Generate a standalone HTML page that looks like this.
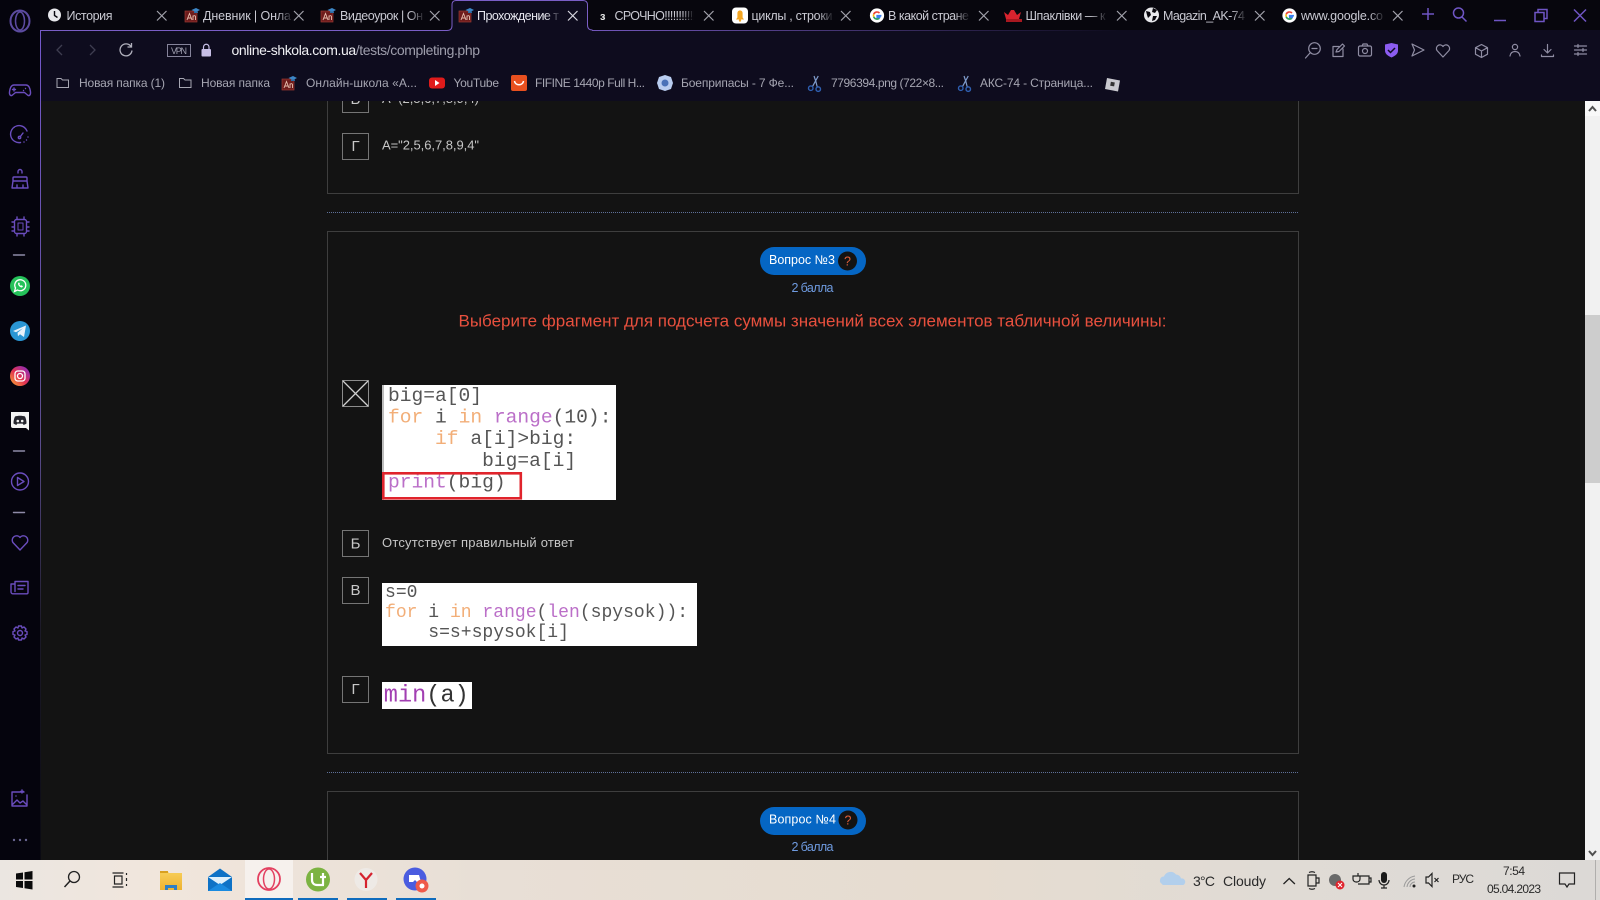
<!DOCTYPE html>
<html lang="ru">
<head>
<meta charset="utf-8">
<title>Прохождение теста</title>
<style>
html,body{margin:0;padding:0;width:1600px;height:900px;overflow:hidden;background:#131313}
svg{display:block;position:absolute;left:0;top:0}
text{font-family:"Liberation Sans","Noto Sans CJK SC",sans-serif}
.tab{font-size:12.5px;fill:#c9c9d2}
.bm{font-size:12px;fill:#a6a6b2}
.pg{font-size:13px;fill:#c6c6c6}
.box{fill:none;stroke:#757575;stroke-width:1}
.ltr{font-size:15px;fill:#c8c8c8;text-anchor:middle}
.mono{font-family:"Liberation Mono",monospace;white-space:pre;fill:#555}
.o{fill:#f2ae78}.p{fill:#bb6fc8}
.x{stroke:#a2a2ac;stroke-width:1.2;fill:none}
.si{fill:none;stroke:#6a4dbd;stroke-width:1.4;stroke-linecap:round;stroke-linejoin:round}
.ti{fill:none;stroke:#8f8da3;stroke-width:1.2;stroke-linecap:round;stroke-linejoin:round}
.wc{fill:none;stroke:#6f55c4;stroke-width:1.5}
.tb{font-size:14px;fill:#2a2a2a}
.tk{fill:none;stroke:#222;stroke-width:1.2}
</style>
</head>
<body>
<svg width="1600" height="900" viewBox="0 0 1600 900" xmlns="http://www.w3.org/2000/svg">
<defs>
<linearGradient id="fd" x1="0" x2="1" y1="0" y2="0"><stop offset="0" stop-color="#07060d" stop-opacity="0"/><stop offset=".55" stop-color="#07060d"/></linearGradient>
<linearGradient id="fa" x1="0" x2="1" y1="0" y2="0"><stop offset="0" stop-color="#0e0c1e" stop-opacity="0"/><stop offset=".55" stop-color="#0e0c1e"/></linearGradient>
<linearGradient id="tline" gradientUnits="userSpaceOnUse" x1="587" x2="1120" y1="0" y2="0"><stop offset="0" stop-color="#7458bd"/><stop offset="1" stop-color="#7458bd" stop-opacity="0"/></linearGradient>
<linearGradient id="sline" x1="0" x2="0" y1="0" y2="1"><stop offset="0" stop-color="#7458cc"/><stop offset=".5" stop-color="#5a4c8c"/><stop offset=".72" stop-color="#1c1a28"/><stop offset="1" stop-color="#0a0a12"/></linearGradient>
<linearGradient id="tbg" x1="0" x2="1" y1="0" y2="0"><stop offset="0" stop-color="#ebe6e1"/><stop offset=".1" stop-color="#f1e6dc"/><stop offset=".3" stop-color="#e8dfd6"/><stop offset=".6" stop-color="#e6dcd0"/><stop offset=".8" stop-color="#e0dbd5"/><stop offset="1" stop-color="#dcd9d6"/></linearGradient>
<linearGradient id="ig" x1="0" x2="1" y1="1" y2="0"><stop offset="0" stop-color="#f9b233"/><stop offset=".45" stop-color="#e4334f"/><stop offset="1" stop-color="#7d2bd0"/></linearGradient>
<linearGradient id="fold" x1="0" x2="0" y1="0" y2="1"><stop offset="0" stop-color="#f8cf5a"/><stop offset="1" stop-color="#eeb230"/></linearGradient>
<symbol id="g" viewBox="0 0 18 18" overflow="visible">
<circle cx="9" cy="9" r="8" fill="#fff"/>
<path d="M14 9.2H9.2V11H12c-.5 1.300-1.600 2-3 2a4 4 0 0 1-3.700-2.600" fill="none" stroke="#3a7ff0" stroke-width="1.800"/>
<path d="M5.300 10.400a4 4 0 0 0 3.700 2.600c1 0 1.800-.3 2.400-.8" fill="none" stroke="#34a853" stroke-width="1.800"/>
<path d="M5.300 7.600a4 4 0 0 0 0 2.800" fill="none" stroke="#fbbc05" stroke-width="1.800"/>
<path d="M5.300 7.600A4 4 0 0 1 11.800 6.200" fill="none" stroke="#ea4335" stroke-width="1.800"/>
</symbol>
<symbol id="an" viewBox="0 0 16 16" overflow="visible">
<rect x="1" y="4" width="12" height="11" fill="#6e1c1c" stroke="#9a3a32" stroke-width=".7"/>
<path d="M3 13 5.500 6.500 8 13M4 11h3M9 13V8.500M9 9.500c1-1.200 2.500-1 2.500.5v3" fill="none" stroke="#e8c0b0" stroke-width=".9"/>
<path d="M7.500 3 12 1l4 2-4 2z" fill="#3d86c6"/><path d="M10 4.500v1.500h4V4.500" fill="#2d6aa0"/>
</symbol>
<symbol id="sc" viewBox="0 0 16 18" overflow="visible">
<path d="M12 1 6 12M7.500 1 9.500 7 11 13" fill="none" stroke="#7f9ccc" stroke-width="1.300"/>
<circle cx="4" cy="14" r="2.400" fill="none" stroke="#2f5fb0" stroke-width="1.500"/>
<circle cx="12" cy="15" r="2.400" fill="none" stroke="#2f5fb0" stroke-width="1.500"/>
</symbol>
</defs>

<!-- page -->
<rect width="1600" height="900" fill="#131313"/>
<rect x="327.500" y="-50" width="971" height="243.500" fill="none" stroke="#3e3e3e"/>
<line x1="327" x2="1299" y1="212.500" y2="212.500" stroke="#5f7199" stroke-dasharray="1 1"/>
<rect x="327.500" y="231.500" width="971" height="522" fill="none" stroke="#3e3e3e"/>
<line x1="327" x2="1299" y1="772.500" y2="772.500" stroke="#5f7199" stroke-dasharray="1 1"/>
<rect x="327.500" y="791.500" width="971" height="150" fill="none" stroke="#3e3e3e"/>

<rect class="box" x="342.500" y="86.500" width="26" height="26"/>
<text class="ltr" x="355.500" y="104">В</text>
<text class="pg" x="382" y="103" textLength="97">A=(2,5,6,7,8,9,4)</text>
<rect class="box" x="342.500" y="133.500" width="26" height="26"/>
<text class="ltr" x="355.500" y="151">Г</text>
<text class="pg" x="382" y="149.500" textLength="97">A="2,5,6,7,8,9,4"</text>

<rect x="760" y="247" width="106" height="28" rx="14" fill="#0566c4"/>
<text x="769" y="264" font-size="12.500" fill="#fff" textLength="66">Вопрос №3</text>
<circle cx="847.500" cy="261" r="9.500" fill="#131313"/>
<text x="847.500" y="265.500" font-size="12.500" fill="#e0603a" text-anchor="middle">?</text>
<text x="791.500" y="292" font-size="12.500" fill="#6f9be0" textLength="42">2 балла</text>
<text x="458.500" y="326.500" font-size="17px" fill="#e8503e" textLength="708">Выберите фрагмент для подсчета суммы значений всех элементов табличной величины:</text>

<rect x="342.500" y="380.500" width="26" height="26" fill="none" stroke="#8c8c8c"/>
<path d="M343 381 368 406M368 381 343 406" stroke="#cfcfcf" stroke-width="1.300"/>

<rect x="382" y="385" width="234" height="115" fill="#fff"/>
<rect x="382" y="385" width="2" height="115" fill="#bdbdbd"/>
<g font-size="19.600px">
<text class="mono" x="388" y="401">big=a[0]</text>
<text class="mono" x="388" y="422.500"><tspan class="o">for</tspan> i <tspan class="o">in</tspan> <tspan class="p">range</tspan>(10):</text>
<text class="mono" x="388" y="444.200">    <tspan class="o">if</tspan> a[i]&gt;big:</text>
<text class="mono" x="388" y="466">        big=a[i]</text>
<text class="mono" x="388" y="487.500"><tspan class="p">print</tspan>(big)</text>
</g>
<rect x="383.300" y="473.300" width="137.500" height="25" fill="none" stroke="#e0242c" stroke-width="2.600"/>

<rect class="box" x="342.500" y="530.500" width="26" height="26"/>
<text class="ltr" x="355.500" y="548.500">Б</text>
<text class="pg" x="382" y="547" textLength="192">Отсутствует правильный ответ</text>

<rect class="box" x="342.500" y="577.500" width="26" height="26"/>
<text class="ltr" x="355.500" y="595">В</text>
<rect x="382" y="583" width="315" height="63" fill="#fff"/>
<g font-size="18.050px">
<text class="mono" x="385" y="597">s=0</text>
<text class="mono" x="385" y="617"><tspan class="o">for</tspan> i <tspan class="o">in</tspan> <tspan class="p">range</tspan>(<tspan class="p">len</tspan>(spysok)):</text>
<text class="mono" x="385" y="637">    s=s+spysok[i]</text>
</g>

<rect class="box" x="342.500" y="676.500" width="26" height="26"/>
<text class="ltr" x="355.500" y="694">Г</text>
<rect x="382" y="682" width="90" height="27" fill="#fff"/>
<text class="mono" x="383.800" y="701.700" font-size="23.600px" style="fill:#333"><tspan style="fill:#a23fb2">min</tspan>(a)</text>

<rect x="760" y="807" width="106" height="28" rx="14" fill="#0566c4"/>
<text x="769" y="823.500" font-size="12.500" fill="#fff" textLength="67">Вопрос №4</text>
<circle cx="848" cy="820" r="9.500" fill="#131313"/>
<text x="848" y="824.500" font-size="12.500" fill="#e0603a" text-anchor="middle">?</text>
<text x="791.500" y="851" font-size="12.500" fill="#6f9be0" textLength="42">2 балла</text>

<!-- scrollbar -->
<rect x="1585" y="101" width="15" height="759" fill="#f1f1f1"/>
<rect x="1585" y="315" width="15" height="168" fill="#cdcdcd"/>
<rect x="1585" y="101" width="15" height="15" fill="#f8f8f8"/>
<path d="M1589 111l3.500-4 3.500 4" fill="none" stroke="#505050" stroke-width="2"/>
<path d="M1589 851l3.500 4 3.500-4" fill="none" stroke="#505050" stroke-width="2"/>

<!-- toolbars -->
<rect x="40" y="30" width="1560" height="71" fill="#0e0c1e"/>
<rect x="0" y="0" width="1600" height="30" fill="#07060d"/>
<rect x="0" y="0" width="40" height="860" fill="#05040d"/>
<rect x="40" y="30" width="1" height="830" fill="url(#sline)"/>
<path d="M40.500 30.500H447q5 0 5-5V5q0-4.500 4-4.500H583q4.500 0 4.500 4.500V25q0 5 5 5" fill="#0e0c1e" stroke="#7a5ec6" stroke-width="1"/>
<rect x="592" y="30" width="1008" height="1" fill="url(#tline)"/>

<ellipse cx="20" cy="21" rx="9.500" ry="10.500" fill="none" stroke="#5c4ba0" stroke-width="2"/>
<ellipse cx="20" cy="21" rx="4.500" ry="9" fill="none" stroke="#5c4ba0" stroke-width="1.500"/>

<!-- tabs -->
<circle cx="54.500" cy="15" r="6.500" fill="#e8e8ec"/><path d="M54.500 11v4.500l3 2" fill="none" stroke="#07060d" stroke-width="1.400"/>
<text class="tab" x="66.500" y="20" textLength="46">История</text>
<path class="x" d="M157 11l9.500 9.500M166.500 11l-9.500 9.500"/>

<use href="#an" x="184" y="7" width="16" height="16"/>
<text class="tab" x="203" y="20" textLength="88">Дневник | Онла</text>
<rect x="277" y="2" width="30" height="27" fill="url(#fd)"/>
<path class="x" d="M294 11l9.500 9.500M303.500 11l-9.500 9.500"/>

<use href="#an" x="320" y="7" width="16" height="16"/>
<text class="tab" x="340" y="20" textLength="83">Видеоурок | Он</text>
<rect x="409" y="2" width="30" height="27" fill="url(#fd)"/>
<path class="x" d="M430 11l9.500 9.500M439.500 11l-9.500 9.500"/>

<use href="#an" x="458" y="7" width="16" height="16"/>
<text class="tab" x="477" y="20" style="fill:#e6e6ee" textLength="82">Прохождение т</text>
<rect x="545" y="2" width="30" height="27" fill="url(#fa)"/>
<path class="x" d="M568 11l9.500 9.500M577.500 11l-9.500 9.500" style="stroke:#d8d8e0"/>

<text x="600" y="20" font-size="11" font-weight="bold" fill="#e8e8e8">з</text>
<text class="tab" x="614.500" y="20" textLength="81.500">СРОЧНО!!!!!!!!!!!</text>
<rect x="682" y="2" width="22" height="27" fill="url(#fd)"/>
<path class="x" d="M704 11l9.500 9.500M713.500 11l-9.500 9.500"/>

<rect x="732" y="7.500" width="16" height="16" rx="4" fill="#fff"/>
<path d="M736 19.500h8l-1.400-2V13a2.600 2.600 0 0 0-5.200 0v4.500z" fill="#f5a623"/><circle cx="740" cy="20.500" r="1.200" fill="#f5a623"/>
<text class="tab" x="751.500" y="20" textLength="81">циклы , строки</text>
<rect x="818" y="2" width="30" height="27" fill="url(#fd)"/>
<path class="x" d="M841 11l9.500 9.500M850.500 11l-9.500 9.500"/>

<use href="#g" x="869" y="7.500" width="16" height="16"/>
<text class="tab" x="888" y="20" textLength="81">В какой стране</text>
<rect x="954" y="2" width="30" height="27" fill="url(#fd)"/>
<path class="x" d="M979 11l9.500 9.500M988.500 11l-9.500 9.500"/>

<path d="M1006 21v-2l-2-7 4 3 3-5 3 0 3 5 4-3-2 7v2z" fill="#d8232e"/><rect x="1006" y="19" width="16" height="3" fill="#a81820"/>
<text class="tab" x="1025.500" y="20" textLength="80">Шпаклівки — к</text>
<rect x="1091" y="2" width="30" height="27" fill="url(#fd)"/>
<path class="x" d="M1117 11l9.500 9.500M1126.500 11l-9.500 9.500"/>

<circle cx="1151.500" cy="15" r="7.500" fill="#e8e8ec"/><path d="M1146 11l4 1 1 3-3 3-1-3zM1153 8l4 2-2 3-3-1zM1153 16h4l-2 4-3 1z" fill="#07060d"/>
<text class="tab" x="1163" y="20" textLength="82">Magazin_AK-74</text>
<rect x="1231" y="2" width="30" height="27" fill="url(#fd)"/>
<path class="x" d="M1255 11l9.500 9.500M1264.500 11l-9.500 9.500"/>

<use href="#g" x="1281.500" y="7.500" width="16" height="16"/>
<text class="tab" x="1301" y="20" textLength="82">www.google.co</text>
<rect x="1369" y="2" width="30" height="27" fill="url(#fd)"/>
<path class="x" d="M1393 11l9.500 9.500M1402.500 11l-9.500 9.500"/>

<path d="M1428 8v12M1422 14h12" class="wc"/>
<circle cx="1458.500" cy="13" r="5" class="wc"/><path d="M1462 17l4.500 4.500" class="wc"/>
<path d="M1494 20.500h12" class="wc"/>
<path d="M1535 12.500h9v9h-9zM1538 12.500v-3h9v9h-3" class="wc"/>
<path d="M1574 9.500l12 12M1586 9.500l-12 12" class="wc"/>

<!-- address bar -->
<path d="M62 45l-5 5 5 5" fill="none" stroke="#3e3d50" stroke-width="1.300"/>
<path d="M90 45l5 5-5 5" fill="none" stroke="#3e3d50" stroke-width="1.300"/>
<path d="M131 46.500a6 6 0 1 0 1 4M131.500 43v4h-4" fill="none" stroke="#b0b0bc" stroke-width="1.300"/>
<rect x="167.500" y="44.500" width="23" height="12" fill="none" stroke="#85839a"/>
<text x="171" y="54" font-size="9" fill="#a0a0b0" textLength="16">VPN</text>
<rect x="201.500" y="49" width="9.500" height="7.500" rx="1" fill="#c7bfe6"/>
<path d="M203.500 49v-2a2.700 2.700 0 0 1 5.500 0v2" fill="none" stroke="#c7bfe6" stroke-width="1.200"/>
<text x="231.500" y="55" font-size="14" fill="#9e9eac" textLength="248.500"><tspan fill="#f0f0f4">online-shkola.com.ua</tspan>/tests/completing.php</text>

<!-- toolbar right icons -->
<g class="ti">
<circle cx="1314.500" cy="48.500" r="5.800"/><path d="M1310 53l-4.500 5M1312 48.500h5"/>
<path d="M1343 49v7.500h-10v-10h6M1336 52l1-2.500 5.500-5.500 2 2-5.500 5.500z"/>
<rect x="1358.500" y="46" width="13" height="10" rx="1.500"/><circle cx="1365" cy="51" r="2.500"/><path d="M1362 46l1-2h4l1 2"/>
<path d="M1412 44l12 6-12 6 2.500-6z"/>
<path d="M1443 57l-6-6.500a3.600 3.600 0 0 1 6-4 3.600 3.600 0 0 1 6 4z"/>
<path d="M1481.500 44.500l6 3.200v6.500l-6 3.300-6-3.300v-6.500zM1475.500 47.700l6 3.300 6-3.300M1481.500 51v6.500"/>
<circle cx="1515" cy="47" r="2.600"/><path d="M1510 56c.5-3 2.500-4.500 5-4.500s4.500 1.500 5 4.500"/>
<path d="M1547.500 44.500v8M1544 49.500l3.500 3.500 3.500-3.500M1541.500 55v1.500h12V55"/>
<path d="M1574.500 46h12M1574.500 50h12M1574.500 54h12M1578 44.500v3M1583 48.500v3M1578 52.500v3"/>
</g>
<path d="M1385 44.500l6.500-1.500 6.500 1.500v6c0 3.500-3 5.500-6.500 7-3.500-1.500-6.500-3.500-6.500-7z" fill="#8b5cf0"/>
<path d="M1388 50l2.500 2.500 4.500-4.500" fill="none" stroke="#0e0c1e" stroke-width="1.500"/>

<!-- bookmarks -->
<path d="M57 78.500h4l1.500 1.500h6v7.500H57z" fill="none" stroke="#a6a6b2"/>
<text class="bm" x="79" y="87" textLength="86">Новая папка (1)</text>
<path d="M179.500 78.500h4l1.500 1.500h6v7.500h-11.500z" fill="none" stroke="#a6a6b2"/>
<text class="bm" x="201" y="87" textLength="69">Новая папка</text>
<use href="#an" x="281" y="75" width="16" height="16"/>
<text class="bm" x="306" y="87" textLength="111">Онлайн-школа «А...</text>
<rect x="429" y="77.500" width="16" height="11" rx="3" fill="#e01b1b"/><path d="M435 80l4.500 3-4.500 3z" fill="#fff"/>
<text class="bm" x="453.500" y="87" textLength="45.500">YouTube</text>
<rect x="511" y="75" width="16" height="16" rx="2" fill="#e8501f"/><path d="M514.500 81c.5 5 8.500 5 9 0" fill="none" stroke="#fff" stroke-width="1.500"/>
<text class="bm" x="535" y="87" textLength="110">FIFINE 1440p Full H...</text>
<path d="M665 75l6 2 2 6-2 6-6 2-6-2-2-6 2-6z" fill="#b9cdf0"/><circle cx="665" cy="83" r="3.500" fill="#4a72b8"/>
<text class="bm" x="681" y="87" textLength="113">Боеприпасы - 7 Фе...</text>
<use href="#sc" x="807" y="75" width="15" height="17"/>
<text class="bm" x="831" y="87" textLength="113">7796394.png (722×8...</text>
<use href="#sc" x="957" y="75" width="15" height="17"/>
<text class="bm" x="980" y="87" textLength="113">АКС-74 - Страница...</text>
<path d="M1107 78l13 2.500-2 11-13-2.500z" fill="#c9c9cf"/><rect x="1110.500" y="82" width="4" height="4" fill="#333" transform="rotate(10 1112 84)"/>

<!-- sidebar -->
<g class="si">
<path transform="translate(0 -2)" d="M14 87h12c3 0 4 3 4.500 7 .4 3-1.500 4.500-3 3l-3-2.500h-9l-3 2.500c-1.500 1.500-3.400 0-3-3 .5-4 1.500-7 4.500-7zM14 90v3M12.500 91.500h3M25.500 90.500v.1M23.500 92.500v.1"/>
<path d="M27 131a8.500 8.500 0 1 0-6.500 11.500M20 137l3-4"/><circle cx="19.500" cy="137.500" r="1.200"/><path d="M28 137v.1M26.500 140v.1M24 142v.1" stroke-dasharray="1 2"/>
<path d="M18 173v-1.500a2 2 0 0 1 4 0V173M14 177h12a1 1 0 0 1 1 1v3l1 7H12l1-7v-3a1 1 0 0 1 1-1zM13 181h14M17 188v-3M23 188v-3"/>
<g transform="translate(0 1)"><rect x="14.500" y="218.500" width="12" height="14" rx="2"/><rect x="18" y="222" width="5" height="7" stroke-width="1"/><path d="M14 221h-2M14 226h-2M14 230h-2M27 221h2M27 226h2M27 230h2M17 218v-2M24 218v-2M17 233v2M24 233v2"/></g>
<path d="M13.500 255h11" stroke="#8f8ba8"/>
<path d="M13.500 451h11" stroke="#8f8ba8"/>
<circle cx="20" cy="481.500" r="8.500"/><path d="M17.500 477.500l6.500 4-6.500 4z"/>
<path d="M13.500 512.500h11" stroke="#8f8ba8"/>
<path d="M20 550l-7.200-7.600a4.400 4.400 0 0 1 7.200-5 4.400 4.400 0 0 1 7.200 5z"/>
<path d="M15 581.500h13v11a1.300 1.300 0 0 1-1.300 1.300H13a2 2 0 0 1-2-2V584h4M15 581.500v10M18 585.500h7M18 589h5"/>
<g transform="translate(0 2)"><path d="M18.500 624h3l.5 2 2-1 2 2-1 2 2 .5v3l-2 .5 1 2-2 2-2-1-.5 2h-3l-.5-2-2 1-2-2 1-2-2-.5v-3l2-.5-1-2 2-2 2 1z"/><circle cx="20" cy="631" r="2.500"/></g>
<path d="M12 792h12M27 795v11H12v-14M12 805l5-5 3 3 3-2 4 4M16 796v.1M22 790v3M20.500 791.500h3"/>
</g>
<circle cx="14" cy="840" r="1.200" fill="#6a6690"/><circle cx="20" cy="840" r="1.200" fill="#6a6690"/><circle cx="26" cy="840" r="1.200" fill="#6a6690"/>

<circle cx="20" cy="286" r="10" fill="#25c25a"/>
<path d="M14.500 291.500l1-3.500a5.500 5.500 0 1 1 2 2z" fill="none" stroke="#fff" stroke-width="1.300"/>
<path d="M18 283.500c0 2 2 4 4 4l1-1.200-1.500-1-.8.500-1.300-1.300.5-.8-1-1.500z" fill="#fff"/>
<circle cx="20" cy="331" r="10" fill="#2a96d4"/>
<path d="M13 331l13-5.500-2 11.500-4-2.700-2 2-.5-3.500 5.500-4.500-7 4z" fill="#e8f2fa"/>
<circle cx="20" cy="376" r="10" fill="url(#ig)"/>
<rect x="15" y="371" width="10" height="10" rx="2.800" fill="none" stroke="#fff" stroke-width="1.300"/><circle cx="20" cy="376" r="2.500" fill="none" stroke="#fff" stroke-width="1.300"/>
<path d="M11 412h18v16.500l0 2-3-2.500H13a2 2 0 0 1-2-2z" fill="#f4f4f4"/>
<path d="M15 416.500c3-1 7-1 10 0 1 2 1.600 4.500 1.500 7-1 .8-2 1.200-3 1.400l-.8-1.300h-5.400l-.8 1.300c-1-.2-2-.6-3-1.400-.1-2.500.5-5 1.500-7z" fill="#26262e"/>
<circle cx="17.800" cy="421" r="1.300" fill="#f4f4f4"/><circle cx="22.200" cy="421" r="1.300" fill="#f4f4f4"/>

<!-- taskbar -->
<rect x="0" y="860" width="1600" height="40" fill="url(#tbg)"/>
<rect x="245" y="860" width="48" height="40" fill="#f6f1ed"/>
<rect x="245" y="898" width="48" height="2" fill="#0f6cbd"/><rect x="298" y="898" width="40" height="2" fill="#0f6cbd"/><rect x="347" y="898" width="40" height="2" fill="#0f6cbd"/><rect x="396" y="898" width="40" height="2" fill="#0f6cbd"/>
<path d="M16 873.500l7-1v7h-7zM24.500 872.300l8-1.300v8.500h-8zM16 881h7v7l-7-1zM24.500 881h8v8.500l-8-1.300z" fill="#0b0b0b"/>
<circle cx="74" cy="877" r="5.500" fill="none" stroke="#222" stroke-width="1.300"/><path d="M70 881l-5.500 6" stroke="#222" stroke-width="1.500"/>
<path class="tk" d="M112.500 873h11M112.500 887h11M114.500 876h7.500v8h-7.500zM126.500 873v2M126.500 878v3M126.500 884v2"/>
<path d="M160 871h7l2 2h13v17h-22z" fill="url(#fold)"/><rect x="160" y="871" width="8" height="2" fill="#d9a020"/><path d="M165 890v-5h12v5h-3v-2h-6v2z" fill="#2f7fc4"/>
<path d="M208 877l12-8.500 12 8.500v14h-24z" fill="#0e72c6"/><path d="M208 877l12 8 12-8" fill="#dff0fb"/><path d="M208 891l12-8 12 8z" fill="#1a8ae0"/>
<circle cx="269" cy="879" r="11" fill="none" stroke="#e34060" stroke-width="1.800"/><ellipse cx="269" cy="879" rx="5.500" ry="10" fill="none" stroke="#e34060" stroke-width="1.500"/>
<circle cx="318" cy="879.500" r="12" fill="#7cb342"/><path d="M312 873v7c0 3 2 5 5 5h7M323 873v12M320 877h6" fill="none" stroke="#fff" stroke-width="2.200"/>
<circle cx="366" cy="879.500" r="11.500" fill="#eeeae6"/><path d="M360 873l6 7 6-7M366 880v8" fill="none" stroke="#d5232f" stroke-width="2.200"/>
<circle cx="415" cy="879" r="11.500" fill="#4a5ce0"/><path d="M409 875h10l2 7h-4l-2-2-2 2h-4z" fill="#fff"/><circle cx="422" cy="886" r="6.500" fill="#ef5a4a"/><circle cx="422" cy="886" r="2.500" fill="#fff"/>

<path d="M1162 884a4 4 0 0 1 2-7.500 7 7 0 0 1 12-2 5.500 5.500 0 0 1 5 4 3.500 3.500 0 0 1 3.500 5.500c-.5.800-1 1-2 1h-19c-.6 0-1 0-1.500-1z" fill="#b2cfec"/>
<text class="tb" x="1193" y="886" textLength="22">3°C</text>
<text class="tb" x="1223" y="886" textLength="43">Cloudy</text>
<path d="M1283.500 884l5.700-5.500 5.700 5.500" fill="none" stroke="#222" stroke-width="1.300"/>
<path class="tk" d="M1308 875h8v11h-8zM1316 878h3v5h-3zM1309 872.500c2-1 4-1 6 0M1309 888.500c2 1 4 1 6 0"/>
<circle cx="1335" cy="880" r="6" fill="#6a6a6a"/><circle cx="1340" cy="885" r="4.500" fill="#e0252e"/><path d="M1338 883l4 4M1342 883l-4 4" stroke="#fff" stroke-width="1"/>
<path class="tk" d="M1358 876h11v8h-11M1369 878h2v4h-2M1358 873v3M1353 876h7v3a3 3 0 0 1-3 3h-1a3 3 0 0 1-3-3z"/>
<rect x="1381" y="872" width="6" height="11" rx="3" fill="#1a1a1a"/><path d="M1379 880a5 5 0 0 0 10 0M1384 885v3M1381 888h6" class="tk"/>
<path d="M1404 887a13 13 0 0 1 11-11M1407 887a9 9 0 0 1 8-8M1410 887a5 5 0 0 1 5-5" fill="none" stroke="#9a9a9a" stroke-width="1"/><circle cx="1414" cy="886" r="1.500" fill="#222"/>
<path class="tk" d="M1426 877v6h2.500l3.500 3.500v-13l-3.500 3.500zM1434.500 878l4 4M1438.500 878l-4 4"/>
<text x="1452" y="883" font-size="12" fill="#2a2a2a" textLength="22">РУС</text>
<text x="1503" y="875" font-size="12" fill="#2a2a2a" textLength="22">7:54</text>
<text x="1487" y="893" font-size="12" fill="#2a2a2a" textLength="54">05.04.2023</text>
<path class="tk" d="M1559.500 873h15v11h-5.500l-2 3-2-3h-5.500z"/>
<line x1="1595.500" x2="1595.500" y1="860" y2="900" stroke="#b0aeac"/>
</svg>
</body>
</html>
